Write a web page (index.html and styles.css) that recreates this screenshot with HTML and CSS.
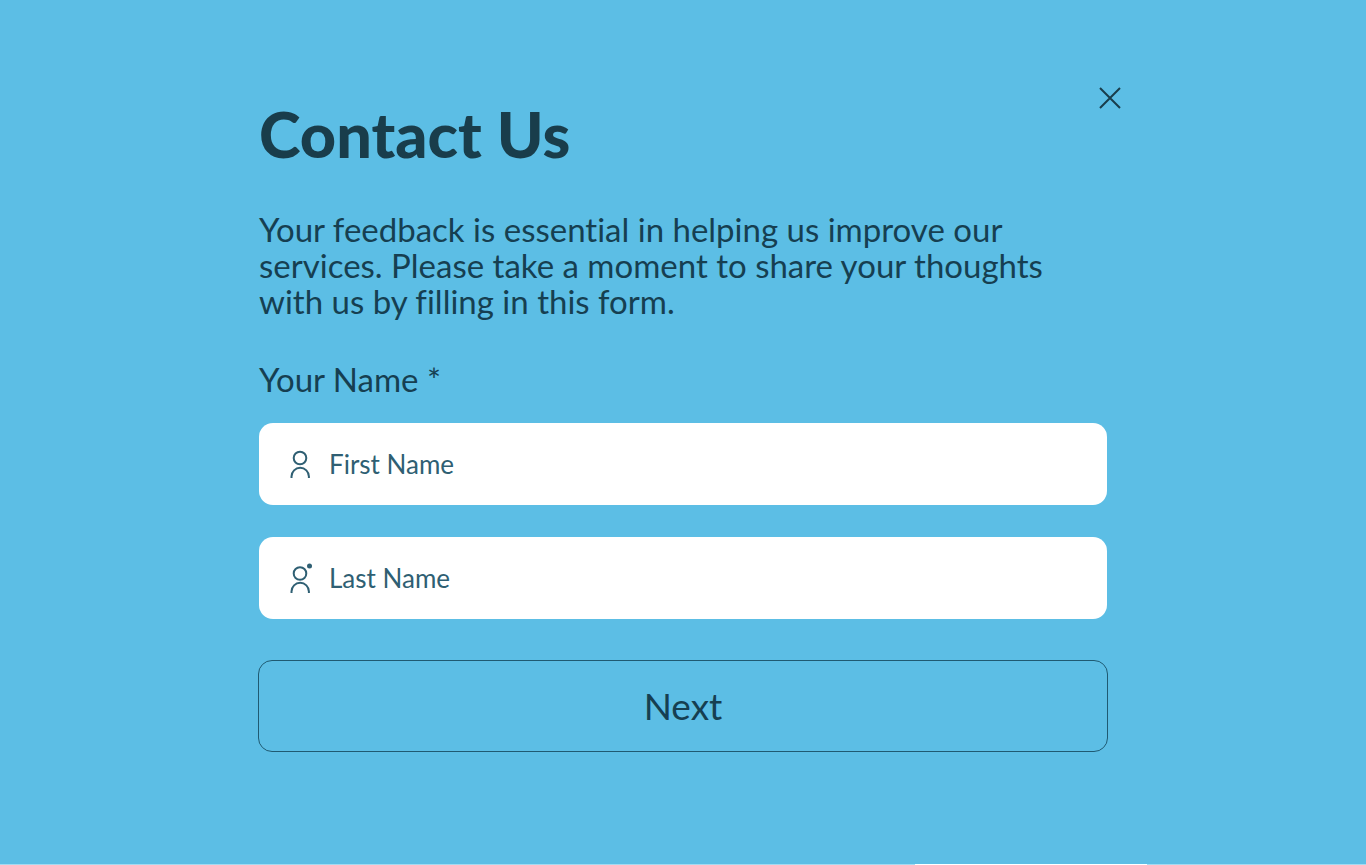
FILE: index.html
```html
<!DOCTYPE html>
<html lang="en">
<head>
    <meta charset="UTF-8">
    <meta name="viewport" content="width=device-width, initial-scale=1.0">
    <title>Contact Us</title>
    <link rel="stylesheet" href="styles.css">
</head>
<body>
    <main class="container">
        <div class="header">
            <h1>Contact Us</h1>
            <button type="button" class="close" aria-label="Close">
                <svg width="22" height="22" viewBox="0 0 22 22" fill="none" stroke="currentColor" stroke-width="2">
                    <path d="M1 1L21 21M21 1L1 21"/>
                </svg>
            </button>
        </div>

        <p class="intro">Your feedback is essential in helping us improve our services. Please take a moment to share your thoughts with us by filling in this form.</p>

        <form id="contactForm">
            <fieldset>
                <legend>Your Name *</legend>

                <label class="field" for="firstName">
                    <svg width="26" height="32" viewBox="0 0 26 32" fill="none" stroke="currentColor" stroke-width="2">
                        <circle cx="13" cy="10" r="6.3"/>
                        <path d="M4.500 30v-1.500a8.700 8.700 0 0 1 17.400 0V30"/>
                    </svg>
                    <input type="text" id="firstName" name="firstName" placeholder="First Name" aria-label="First Name" required>
                </label>

                <label class="field" for="lastName">
                    <svg width="26" height="32" viewBox="0 0 26 32" fill="none" stroke="currentColor" stroke-width="2">
                        <circle cx="13" cy="11.500" r="6.3"/>
                        <path d="M4.500 31v-1.500a8.700 8.700 0 0 1 17.400 0V31"/>
                        <circle cx="22.500" cy="4" r="2.500" fill="currentColor" stroke="none"/>
                    </svg>
                    <input type="text" id="lastName" name="lastName" placeholder="Last Name" aria-label="Last Name" required>
                </label>
            </fieldset>

            <button type="submit" class="next">Next</button>
        </form>
    </main>
    <div class="bottom-edge"></div>
</body>
</html>
```
FILE: styles.css
```css
:root {
    --background-color: #5cbee5;
    --heading-color: #193d4b;
    --text-color: #163f51;
    --field-color: #2f5f73;
    --border-radius: 14px;
}

* {
    margin: 0;
    padding: 0;
    box-sizing: border-box;
    font-family: Lato, 'Open Sans', sans-serif;
}

body {
    display: flex;
    flex-direction: column;
    min-height: 100vh;
    background-color: var(--background-color);
    color: var(--text-color);
    font-variant-ligatures: none;
}

.container {
    flex: 1;
    width: 100%;
    max-width: 890px;
    margin: 0 auto;
    padding: 87px 20px 40px;
}

.header {
    display: flex;
    justify-content: space-between;
    align-items: flex-start;
    margin-bottom: 40px;
    padding-left: 1px;
}

h1 {
    padding-top: 10px;
    color: var(--heading-color);
    font-size: 63px;
    font-weight: 900;
    line-height: 74px;
}

.close {
    margin-right: -13px;
    border: none;
    background: none;
    color: var(--heading-color);
    cursor: pointer;
}

.close svg {
    display: block;
}

.intro {
    margin-bottom: 42px;
    padding: 0 1px;
    font-size: 33px;
    line-height: 36px;
}

fieldset {
    padding: 0 1px;
    border: none;
}

legend {
    margin-bottom: 26px;
    font-size: 33px;
    line-height: 36px;
}

.field {
    display: flex;
    align-items: center;
    gap: 16px;
    height: 82px;
    margin-bottom: 32px;
    padding: 0 28px;
    border-radius: var(--border-radius);
    background: white;
    color: var(--field-color);
}

.field svg {
    flex-shrink: 0;
}

.field input {
    flex: 1;
    min-width: 0;
    border: none;
    outline: none;
    background: none;
    color: inherit;
    font-size: 26px;
}

.field input::placeholder {
    color: inherit;
    opacity: 1;
}

.field:last-child {
    margin-bottom: 41px;
}

.next {
    display: block;
    width: 100%;
    padding: 21px;
    border: 1px solid #1f5a72;
    border-radius: var(--border-radius);
    background: none;
    color: var(--text-color);
    font-size: 37px;
    line-height: 48px;
    cursor: pointer;
}

/* Thin light line along the bottom of the page */
.bottom-edge {
    height: 1px;
    background: linear-gradient(to right, #a5daf0 67%, white 67%, white 84%, #a5daf0 84%);
}
```
